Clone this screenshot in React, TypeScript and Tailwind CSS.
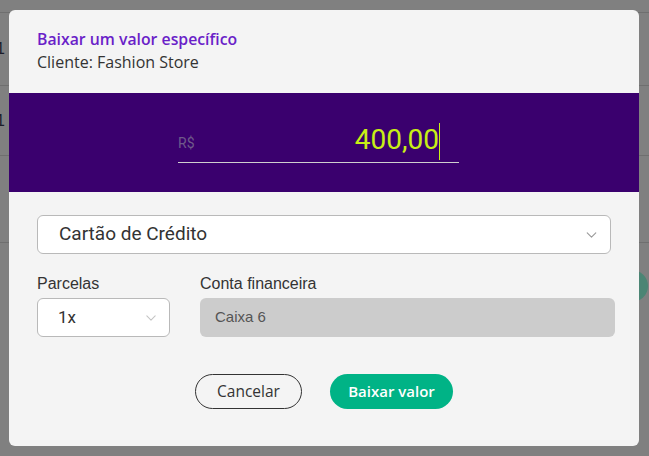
import React from "react";

function Chevron({ className, w = 12, h = 7 }: { className?: string; w?: number; h?: number }) {
  return (
    <svg className={className} width={w} height={h} viewBox="0 0 12 7" fill="none">
      <path d="M1 1l5 5 5-5" stroke="currentColor" strokeWidth="1.3" strokeLinecap="round" strokeLinejoin="round" />
    </svg>
  );
}

export default function App() {
  return (
    <div className="relative w-[649px] h-[456px] overflow-hidden bg-[#808080] font-['Open_Sans',sans-serif]">
      {/* dimmed page behind */}
      <div className="flex flex-col">
        <div className="h-[13px] border-b border-[#6f6f6f]" />
        <div className="h-[73px] border-b border-[#6f6f6f] flex items-center">
          <span className="-ml-[4px] text-[16px] text-[#1c1c2a] font-['Liberation_Sans',sans-serif]">1</span>
        </div>
        <div className="h-[70px] border-b border-[#6f6f6f] flex items-center">
          <span className="-ml-[4px] text-[16px] text-[#1c1c2a] font-['Liberation_Sans',sans-serif]">1</span>
        </div>
        <div className="h-[87px] border-b border-[#6f6f6f]" />
      </div>
      <div className="absolute left-[616px] top-[270px] w-[32px] h-[32px] rounded-full bg-[#4c8574]" />

      {/* modal */}
      <div className="absolute inset-0 pl-[9px] pt-[10px]">
        <div className="w-[630px] h-[436px] rounded-[6px] bg-[#f4f4f4] flex flex-col overflow-hidden">
          <div className="px-[28px] pt-[19px] pb-[21px]">
            <div className="text-[15.8px] leading-[20px] font-semibold text-[#6a1fc8]">Baixar um valor específico</div>
            <div className="mt-[3px] text-[16px] leading-[20px] text-[#333333]">Cliente: Fashion Store</div>
          </div>

          <div className="h-[99px] bg-[#3a006e] pl-[169px] pt-[30px]">
            <div className="w-[281px] h-[40px] border-b border-[#cfcfcf] flex items-end justify-between pb-[5px] pr-[19px]">
              <span className="text-[14px] leading-[20px] text-[#6f5a8a] font-['Roboto',sans-serif] mb-[4px]">R$</span>
              <div className="flex items-end">
                <span className="text-[28px] leading-[34px] text-[#c8ef16] font-['Roboto',sans-serif]">400,00</span>
                <span className="w-[1px] h-[37px] bg-[#c8ef16] -mb-[3px]" />
              </div>
            </div>
          </div>

          <div className="px-[28px] pt-[23px]">
            <div className="w-[574px] h-[39px] rounded-[6px] border border-[#b9b9b9] bg-white flex items-center justify-between pl-[21px] pr-[13px]">
              <span className="text-[19px] text-[#333333] font-['Roboto',sans-serif]">Cartão de Crédito</span>
              <Chevron className="text-[#9a9a9a]" w={11} h={6} />
            </div>

            <div className="mt-[22px] flex gap-[30px]">
              <div className="flex flex-col">
                <span className="text-[16px] leading-[16px] text-[#333333] font-['Liberation_Sans',sans-serif]">Parcelas</span>
                <div className="mt-[6px] w-[133px] h-[39px] rounded-[6px] border border-[#b9b9b9] bg-white flex items-center justify-between pl-[20px] pr-[13px]">
                  <span className="text-[17px] text-[#333333] font-['Roboto',sans-serif]">1x</span>
                  <Chevron className="text-[#c4c4c4]" w={10} h={6} />
                </div>
              </div>
              <div className="flex flex-col">
                <span className="text-[16px] leading-[16px] text-[#333333] font-['Liberation_Sans',sans-serif]">Conta financeira</span>
                <div className="mt-[6px] w-[415px] h-[39px] rounded-[6px] bg-[#cccccc] flex items-center pl-[15px]">
                  <span className="text-[15px] text-[#555555] font-['Liberation_Sans',sans-serif]">Caixa 6</span>
                </div>
              </div>
            </div>

            <div className="mt-[37px] flex justify-center gap-[28px]">
              <button className="w-[107px] h-[35px] rounded-full border border-[#333333] text-[15.5px] text-[#333333]">Cancelar</button>
              <button className="w-[123px] h-[35px] rounded-full bg-[#00b386] text-[15px] font-semibold text-white">Baixar valor</button>
            </div>
          </div>
        </div>
      </div>
    </div>
  );
}
